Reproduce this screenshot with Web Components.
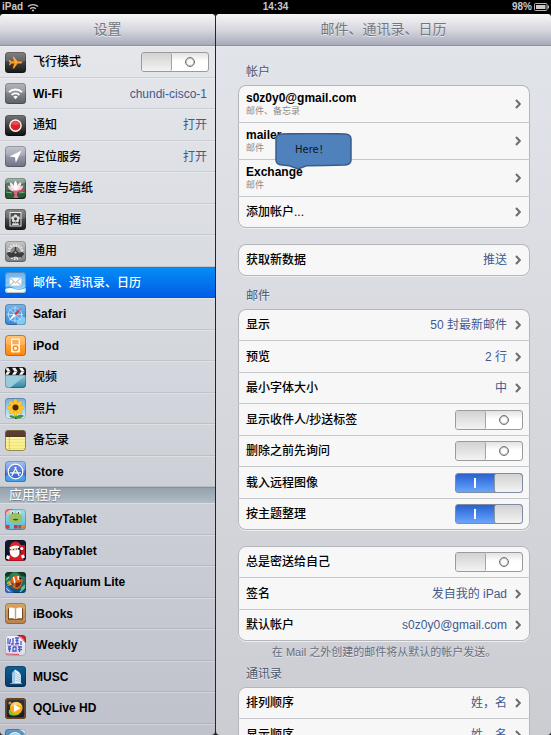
<!DOCTYPE html>
<html lang="zh-CN">
<head>
<meta charset="utf-8">
<meta name="viewport" content="width=device-width, initial-scale=1">
<title>设置</title>
<style>
	body {
		margin: 0;
		background: #000;
		font-family: "Liberation Sans", "Noto Sans CJK SC", sans-serif;
		font-size: 12px;
	}
	settings-card + settings-card {
		margin-top: 16px;
	}
</style>
</head>
<body>
<settings-app>
	<status-bar slot="status" device="iPad" time="14:34" battery="98%"></status-bar>

	<settings-pane slot="sidebar" heading="设置" kind="sidebar">
		<nav-list>
			<nav-row icon="airplane" label="飞行模式" toggle></nav-row>
			<nav-row icon="wifi" label="Wi-Fi" value="chundi-cisco-1"></nav-row>
			<nav-row icon="notice" label="通知" value="打开"></nav-row>
			<nav-row icon="location" label="定位服务" value="打开"></nav-row>
			<nav-row icon="wallpaper" label="亮度与墙纸"></nav-row>
			<nav-row icon="frame" label="电子相框"></nav-row>
			<nav-row icon="general" label="通用"></nav-row>
			<nav-row icon="mail" label="邮件、通讯录、日历" selected></nav-row>
			<nav-row icon="safari" label="Safari"></nav-row>
			<nav-row icon="ipod" label="iPod"></nav-row>
			<nav-row icon="video" label="视频"></nav-row>
			<nav-row icon="photos" label="照片"></nav-row>
			<nav-row icon="notes" label="备忘录"></nav-row>
			<nav-row icon="store" label="Store"></nav-row>
		</nav-list>
		<nav-heading>应用程序</nav-heading>
		<nav-list>
			<nav-row icon="baby" label="BabyTablet"></nav-row>
			<nav-row icon="santa" label="BabyTablet"></nav-row>
			<nav-row icon="aquarium" label="C Aquarium Lite"></nav-row>
			<nav-row icon="ibooks" label="iBooks"></nav-row>
			<nav-row icon="iweekly" label="iWeekly"></nav-row>
			<nav-row icon="musc" label="MUSC"></nav-row>
			<nav-row icon="qqlive" label="QQLive HD"></nav-row>
			<nav-row icon="globe" label="uu Hill"></nav-row>
		</nav-list>
	</settings-pane>

	<settings-pane slot="detail" heading="邮件、通讯录、日历" kind="detail">
		<group-label>帐户</group-label>
		<settings-card style="--rows: 37px 37px 37px 31px">
			<callout-note>Here！</callout-note>
			<settings-row label="s0z0y0@gmail.com" detail="邮件、备忘录"></settings-row>
			<settings-row label="mailer" detail="邮件"></settings-row>
			<settings-row label="Exchange" detail="邮件"></settings-row>
			<settings-row label="添加帐户..."></settings-row>
		</settings-card>

		<settings-card>
			<settings-row label="获取新数据" value="推送"></settings-row>
		</settings-card>

		<group-label>邮件</group-label>
		<settings-card>
			<settings-row label="显示" value="50 封最新邮件"></settings-row>
			<settings-row label="预览" value="2 行"></settings-row>
			<settings-row label="最小字体大小" value="中"></settings-row>
			<settings-row label="显示收件人/抄送标签" toggle></settings-row>
			<settings-row label="删除之前先询问" toggle></settings-row>
			<settings-row label="载入远程图像" toggle checked></settings-row>
			<settings-row label="按主题整理" toggle checked></settings-row>
		</settings-card>

		<settings-card>
			<settings-row label="总是密送给自己" toggle></settings-row>
			<settings-row label="签名" value="发自我的 iPad"></settings-row>
			<settings-row label="默认帐户" value="s0z0y0@gmail.com"></settings-row>
		</settings-card>
		<group-note>在 Mail 之外创建的邮件将从默认的帐户发送。</group-note>

		<group-label>通讯录</group-label>
		<settings-card>
			<settings-row label="排列顺序" value="姓，名"></settings-row>
			<settings-row label="显示顺序" value="姓，名"></settings-row>
		</settings-card>
	</settings-pane>
</settings-app>

<script>
// Icon art on a 21x21 grid: [top colour, bottom colour, shapes, glossy]
const ICONS = {
	airplane: ['#6a6a6a', '#161616', `
		<path d="M17.2 10.6c0-.7-.8-1-1.6-1h-3L9 4.8H7.6l1.7 4.8H6.4L5 7.9H3.9l.8 2.7-.8 2.7H5l1.4-1.7h2.9l-1.7 4.8H9l3.6-4.8h3c.8 0 1.6-.3 1.6-1z" fill="#ff9a1c"/>`, true],
	wifi: ['#a3a7ae', '#5c6068', `
		<g fill="none" stroke="#fff" stroke-width="1.9">
			<path d="M4 9.2a9.2 9.2 0 0 1 13 0"/>
			<path d="M6.6 12a5.5 5.5 0 0 1 7.8 0"/>
		</g>
		<path d="M10.5 16.2l-2.2-2.4a3.2 3.2 0 0 1 4.4 0z" fill="#fff"/>`, true],
	notice: ['#777', '#0c0c0c', `
		<circle cx="10.5" cy="10.6" r="6.3" fill="#fff"/>
		<circle cx="10.5" cy="10.6" r="4.9" fill="#d9232b"/>
		<path d="M6.3 9a4.5 4.5 0 0 1 8.4 0q-4.200 2-8.400 0z" fill="#e6504f"/>`],
	location: ['#b9bcc9', '#6e7183', `
		<path d="M16.6 4.4L4.4 10.5l5.5.7.9 5.5z" fill="#fff"/>`, true],
	wallpaper: ['#a3bbb0', '#12281c', `
		<path d="M0 6q5-3 9 0t12-2v6H0z" fill="#4a7562"/>
		<path d="M0 13l7-2 3 9-9 1zM21 12l-7 1-2 7 8-1z" fill="#2c5a37"/>
		<path d="M1 14l6 1M14 15l6-1" stroke="#7bb488"/>
		<path d="M2.500 7.500q5 .5 8 6-6.500.500-8-6zM18.500 7.500q-5 .5-8 6 6.500.500 8-6z" fill="#f7c5d2"/>
		<path d="M4.800 4q5 2 5.700 9.500-6-3-5.700-9.500zM16.200 4q-5 2-5.700 9.500 6-3 5.700-9.500z" fill="#fbe6ea"/>
		<path d="M10.500 2.500q3.500 5 .8 10.500h-1.600q-2.700-5.500.8-10.500z" fill="#fff"/>
		<path d="M8 12.500h5l-1 4.500 1.500 3h-5l1-3z" fill="#e0607f"/>
		<path d="M13 12.500q4-1 7-.5-2 3-7 2z" fill="#d63e63"/>`],
	frame: ['#757575', '#1c1c1c', `
		<rect x="5" y="3.500" width="11" height="13.500" fill="#333" stroke="#e8e8e8"/>
		<g fill="#dcdcdc">
			<circle cx="10.500" cy="7.400" r="1.800"/><circle cx="13" cy="9" r="1.800"/>
			<circle cx="12.300" cy="11.600" r="1.800"/><circle cx="8.700" cy="11.600" r="1.800"/>
			<circle cx="8" cy="9" r="1.800"/>
			<path d="M7 16q0-3 3.200-1.500V12h.6v2.500Q14 13 14 16z"/>
		</g>
		<circle cx="10.500" cy="9.800" r="1.500" fill="#222"/>`, true],
	general: ['#c9c9c9', '#7c7c7c', `
		<circle cx="10.500" cy="11" r="7" fill="none" stroke="#ececec" stroke-width="2.200" stroke-dasharray="1.500 1.250"/>
		<circle cx="10.500" cy="11" r="5.800" fill="#8b8b8b" stroke="#e2e2e2"/>
		<path d="M1.500 12.500q3-2.500 5-.5l4-2.500 4 2.500q2-2 5 .5l-3 4h-3.500l-2.500-1.500L8 16.500H4.500z" fill="#3c3c3c"/>
		<circle cx="10.500" cy="11.500" r="1.800" fill="#999" stroke="#2c2c2c"/>
		<path d="M10.500 6v3.500" stroke="#3a3a3a" stroke-width="1.300"/>`],
	mail: ['#4ba0ea', '#b5e2f8', `
		<path d="M0 15q5-2 9 1t12-1v6H0z" fill="#38abd6"/>
		<path d="M0 17q6-2 10 0t11-1v5H0z" fill="#f3fbff"/>
		<rect x="4.500" y="5.500" width="12" height="8.500" rx=".5" fill="#fff" stroke="#b7bcc4" stroke-width=".6"/>
		<path d="M4.800 5.800l5.700 5 5.700-5M4.800 13.700l4.200-4.200M16.200 13.700L12 9.500" fill="none" stroke="#858b96" stroke-width=".8"/>`, true],
	safari: ['#78b5ed', '#3c86d2', `
		<path d="M11 13l4-2 6 3v7h-9z" fill="#80cff0"/>
		<circle cx="10" cy="10.500" r="6.700" fill="#5aa3e6" stroke="#a9d4f7"/>
		<path d="M10 2.500v16M2 10.500h16M4.400 4.900l11.200 11.200M15.600 4.900L4.400 16.100" stroke="#dff2ff" stroke-width=".7"/>
		<path d="M17 3.500L9 9.400l1.900 2z" fill="#df352b"/>
		<path d="M3.800 17.300l5.200-7.900 1.900 2z" fill="#fff"/>`],
	ipod: ['#ffb968', '#ff8500', `
		<rect x=".5" y=".5" width="20" height="20" rx="3" fill="none" stroke="#d59a23"/>
		<rect x="6" y="3.500" width="9" height="14" rx="1.200" fill="#fff4e6"/>
		<rect x="7.300" y="4.900" width="6.400" height="4.300" fill="#ff9b2e"/>
		<circle cx="10.500" cy="13.300" r="2.300" fill="none" stroke="#ff8a10" stroke-width="1.400"/>`, true],
	video: ['#d8eef5', '#2d87a5', `
		<path d="M0 8h21L5 21H0z" fill="#9acbdc"/>
		<rect width="21" height="8.200" fill="#171717"/>
		<g fill="#f4f4f4">
			<path d="M0 .8h3.200l2.300 3.400H2.200zM7 .8h3.400l2.200 3.400H9.200zM14 .8h3.400l2.200 3.400h-3.400z"/>
			<path d="M2.200 4.500h3.300L3.200 7.800H0zM9.200 4.500h3.400l-2.200 3.300H7zM16.200 4.500h3.400l-2.200 3.300H14z"/>
		</g>`],
	photos: ['#71aee8', '#d6efff', `
		<path d="M10 13l1 8" stroke="#2d8a28" stroke-width="2"/>
		<path d="M11 19q4-4 8-1-4 3.500-8 2zM10 19q-3-3-6-1 3 3 6 2z" fill="#3d9930"/>
		<g fill="#ffc928" stroke="#e99a0b" stroke-width=".4">
			<ellipse cx="10.500" cy="4.500" rx="1.900" ry="3.800"/><ellipse cx="10.500" cy="14.500" rx="1.900" ry="3.800"/>
			<ellipse cx="5.500" cy="9.500" rx="3.800" ry="1.900"/><ellipse cx="15.500" cy="9.500" rx="3.800" ry="1.900"/>
			<ellipse cx="7" cy="6" rx="3.700" ry="1.900" transform="rotate(45 7 6)"/>
			<ellipse cx="14" cy="13" rx="3.700" ry="1.900" transform="rotate(45 14 13)"/>
			<ellipse cx="14" cy="6" rx="3.700" ry="1.900" transform="rotate(-45 14 6)"/>
			<ellipse cx="7" cy="13" rx="3.700" ry="1.900" transform="rotate(-45 7 13)"/>
		</g>
		<circle cx="10.500" cy="9.500" r="3" fill="#4b260d"/>`],
	notes: ['#fdf9a8', '#f7ee82', `
		<path d="M1 9.500h19M1 12.500h19M1 15.500h19M1 18.500h19" stroke="#e8dd7c" stroke-width=".7"/>
		<path d="M4.300 6v15" stroke="#d5a05a" stroke-width=".6"/>
		<rect width="21" height="6" fill="#5b3d31"/>
		<path d="M0 6.400h21" stroke="#3c251c"/>
		<rect x=".4" y=".4" width="20.200" height="20.200" rx="3" fill="none" stroke="#a59a5a" stroke-width=".8"/>`],
	store: ['#95b6ee', '#1f4fc4', `
		<path d="M0 15q10-4 21 0v6H0z" fill="#49a0ea"/>
		<circle cx="10.500" cy="10.500" r="7.300" fill="#3a6bd8" stroke="#fff" stroke-width="1.200"/>
		<path d="M7 14.500l4-8M14 14.500l-4-8M5.500 11.800h10" stroke="#fff" stroke-width="1.300" stroke-linecap="round"/>`, true],
	baby: ['#a4dced', '#4dbbdc', `
		<path d="M0 0h8L0 7z" fill="#e88080"/><path d="M1 5l5-4" stroke="#fff" stroke-width=".8"/>
		<circle cx="7.500" cy="4" r="2.200" fill="#e4f0c8"/><circle cx="13.500" cy="4" r="2.200" fill="#e4f0c8"/>
		<ellipse cx="10.500" cy="9" rx="7" ry="5.300" fill="#9cc065"/>
		<path d="M7.600 10.200q3 2.500 6 0-3-.8-6 0z" fill="#3c5619"/>
		<circle cx="7.500" cy="4" r=".7"/><circle cx="13.500" cy="4" r=".7"/>
		<rect x="1" y="16" width="3.500" height="3.500" fill="#d9363d"/><rect x="5.300" y="16" width="3" height="3.500" fill="#6fc5dc"/>
		<rect x="9" y="16" width="3.500" height="3.500" fill="#c8343f"/><rect x="13.300" y="16" width="3" height="3.500" fill="#a84b5a"/>
		<rect x="17" y="16" width="3" height="3.500" fill="#f17c29"/>`],
	santa: ['#151b33', '#090d1c', `
		<path d="M15 5h5v10h-4z" fill="#c41a22"/>
		<path d="M2.500 21q0-9 8-9t8.500 9z" fill="#d91c24"/>
		<path d="M4.500 8q1-6.500 6-6.500 5.500.500 6 6.500l-3-1.500z" fill="#e3222a"/>
		<circle cx="16.800" cy="8.500" r="1.600" fill="#fff"/>
		<circle cx="9.500" cy="9.500" r="3.600" fill="#f6c9a8"/>
		<path d="M4.500 7.500q4.500-2.800 9.500-1.500l.3 2q-5-1-9.500 1.500z" fill="#fff"/>
		<path d="M4.500 10q5 1.500 10-.5.8 7.500-4.500 8-5.500-.500-5.500-7.500z" fill="#fff"/>
		<circle cx="8.300" cy="9.400" r=".5"/><circle cx="11.300" cy="9.100" r=".5"/>
		<path d="M2 15l3 1.500-1 3-3-1zM16 15.500l3-1 1 3-3 1z" fill="#fff"/>`],
	aquarium: ['#2d8b51', '#0d4d83', `
		<path d="M0 0h8L3 5 0 4zM12 0h9v5l-5-1z" fill="#153d26"/>
		<path d="M1 8l3-3M2 12l3-3M16 17l4-4M15 20l5-5" stroke="#65d18b" stroke-width="1.300"/>
		<path d="M5 9q3-7 9-5 5 2 3 7-1 6-6 6l-4-2 2-3z" fill="#e6601c"/>
		<path d="M8.500 5l1.500 6M13 4l.5 4" stroke="#fff" stroke-width="1.500"/>
		<path d="M10.500 10q3 2 6-1-1 7-6 6.500z" fill="#7b2c10"/>
		<circle cx="15.500" cy="6.500" r="1.100" fill="#111"/>
		<path d="M5 9l-3 1 2 2-2 2 5-1z" fill="#f4a02b"/>
		<path d="M0 12l9 9H0z" fill="#3c76e0"/>
		<path d="M1.500 16.500l3 3" stroke="#fff" stroke-width=".8"/>`],
	ibooks: ['#d8a764', '#b9824a', `
		<path d="M0 5h21M0 16h21" stroke="#e5bd83" stroke-width=".6"/>
		<path d="M3 5.500l1-.5v10.500H17V5l1 .5v11.200h-6.500l-1 .8-1-.8H3z" fill="#6d4520"/>
		<path d="M10.500 6Q7.500 3.600 4 5v10.300q3.500-1 6.500 1zM10.500 6q3-2.400 6.500-1v10.300q-3.500-1-6.500 1z" fill="#fff"/>
		<path d="M10.500 6v10.300" stroke="#8c8c8c" stroke-width=".8"/>
		<path d="M9.500 6.500v8.700M11.500 6.500v8.700" stroke="#ddd" stroke-width=".6"/>`],
	iweekly: ['#f5f5fb', '#d8dae8', `
		<g stroke="#4a56cc" stroke-width="1.300" fill="none">
			<path d="M3 3v6M5.500 4l-1 5M8 3v6H6M10 3h4M10.500 5.500h3M12 3v6M10 9l4-.5M16 6v4"/>
			<path d="M3 12l3-.5M4.500 11v6M3 14h3M8 12v5M8 12h3v4H8M13 12h4M14.500 11v6M13 14.500h4"/>
		</g>
		<path d="M1 19l13 .5" stroke="#d8465b" stroke-width="1.200"/>
		<path d="M2 10.300h12" stroke="#e48896" stroke-width=".8"/>
		<path d="M12 0h9v8z" fill="#d91f30"/><path d="M15 1.500l4 4" stroke="#fff" stroke-width=".8"/>`],
	musc: ['#0f5e92', '#073a68', `
		<path d="M7 7l3-3.500v14H7z" fill="#9fcbe5"/>
		<path d="M10 3.500q5 2 6 6v8h-6z" fill="#dfeef7"/>
		<path d="M10 6.500l6 4M10 9l6 3.500M10 11.500l6 2.700M10 14l6 1.800" stroke="#8fbbd8" stroke-width=".7"/>
		<path d="M5 17.500h12" stroke="#8fc0dd" stroke-width=".8"/>`],
	qqlive: ['#2b3a49', '#111b27', `
		<rect x=".8" y=".8" width="19.400" height="19.400" rx="2.700" fill="none" stroke="#8b5828" stroke-width="1.600"/>
		<circle cx="5" cy="5" r="1.600" fill="#ef8e1d"/>
		<path d="M4 12q3-2 5 1t6 3q-5 3-10 1-2-2-1-5z" fill="#83bf31"/>
		<circle cx="11.300" cy="10" r="6.300" fill="#ffab16"/>
		<path d="M5.500 9q1-5 6-5 4 .5 5.500 4-6-2-11.500 1z" fill="#ffd15c"/>
		<path d="M9 6.300l6.500 3.900L9 14z" fill="#fff"/>`],
	globe: ['#5f9fcb', '#1d5e93', `
		<circle cx="10" cy="11" r="7.500" fill="#a9d4ea" stroke="#e1f2fa"/>
		<path d="M14 0h7v7z" fill="#dceaf3"/><path d="M16 1.500l3.500 3.500" stroke="#4177a3"/>
		<circle cx="10" cy="11" r="4" fill="#4b90be"/>`]
}

function drawIcon(name) {
	const [top, bottom, shapes, glossy] = ICONS[name]
	return `
		<svg class="icon" viewBox="0 0 21 21" aria-hidden="true">
			<defs>
				<linearGradient id="fill" x2="0" y2="1">
					<stop offset="0" stop-color="${top}"/>
					<stop offset="1" stop-color="${bottom}"/>
				</linearGradient>
				<clipPath id="tile"><rect width="21" height="21" rx="3.500"/></clipPath>
			</defs>
			<g clip-path="url(#tile)">
				<rect width="21" height="21" fill="url(#fill)"/>
				${shapes}
				${glossy ? '<path d="M0 0h21v9q-10.500 3-21 0z" fill="#fff" opacity=".16"/>' : ''}
			</g>
			<rect x=".5" y=".5" width="20" height="20" rx="3" fill="none" stroke="#000" stroke-opacity=".22"/>
		</svg>`
}

// Chinese labels look too heavy in bold, so they get the medium weight
function labelClass(text) {
	return /[\u4e00-\u9fff]/.test(text) ? 'label han' : 'label'
}

// Shared by every row that can hold a switch
const SWITCH_CSS = `
	input {
		appearance: none;
		position: relative;
		flex: none;
		width: 68px;
		height: 20px;
		margin: 0;
		border: 1px solid #9b9b9b;
		border-radius: 3px;
		overflow: hidden;
		display: flex;
		align-items: center;
		background: linear-gradient(#e2e2e2, #fff 45%);
	}
	input::before {
		content: "";
		order: 1;
		box-sizing: border-box;
		width: 30px;
		height: 18px;
		border-right: 1px solid #a3a3a3;
		border-radius: 2px;
		background: linear-gradient(#d2d2d2, #f3f3f3);
	}
	input::after {
		content: "";
		order: 2;
		box-sizing: border-box;
		width: 10px;
		height: 10px;
		margin: 0 auto;
		border: 1px solid #707070;
		border-radius: 50%;
		box-shadow: inset 0 0 0 1px #c4c4c4;
	}
	input:checked {
		border-color: #7f8ba0;
		background: linear-gradient(#2c61cb, #4583ea 50%, #6ca5f8);
	}
	input:checked::before {
		order: 3;
		width: 28px;
		border-right: 0;
		border-left: 1px solid #8a93a3;
	}
	input:checked::after {
		width: 2px;
		border: 0;
		border-radius: 0;
		background: #fff;
		box-shadow: none;
	}
`

class SettingsApp extends HTMLElement {
	constructor() {
		super()
		this.attachShadow({ mode: 'open' })
	}

	connectedCallback() {
		this.shadowRoot.innerHTML = `
			<style>
				:host {
					display: flex;
					flex-direction: column;
					height: 100dvh;
					overflow: hidden;
				}
				main {
					flex: 1;
					min-height: 0;
					display: grid;
					grid-template-columns: 215px minmax(0, 1fr);
					gap: 1px;
					background: #22252b;
				}
			</style>
			<slot name="status"></slot>
			<main>
				<slot name="sidebar"></slot>
				<slot name="detail"></slot>
			</main>`
	}
}
customElements.define('settings-app', SettingsApp)

class StatusBar extends HTMLElement {
	constructor() {
		super()
		this.attachShadow({ mode: 'open' })
	}

	connectedCallback() {
		this.shadowRoot.innerHTML = `
			<style>
				:host {
					display: grid;
					grid-template-columns: 1fr auto 1fr;
					align-items: center;
					height: 14px;
					padding: 0 2px;
					background: #000;
					color: #c9c9c9;
					font-size: 10px;
					font-weight: bold;
					line-height: 14px;
				}
				div {
					display: flex;
					align-items: center;
					gap: 4px;
				}
				.right {
					justify-content: flex-end;
					gap: 2px;
				}
			</style>
			<div>
				<span>${this.getAttribute('device')}</span>
				<svg width="12" height="9" viewBox="0 0 12 9" aria-hidden="true">
					<path d="M1 3.600a7.200 7.200 0 0 1 10 0M3.200 5.800a4 4 0 0 1 5.600 0" fill="none" stroke="#c9c9c9" stroke-width="1.400"/>
					<path d="M6 8.800L4.600 7.300a2 2 0 0 1 2.800 0z" fill="#c9c9c9"/>
				</svg>
			</div>
			<span>${this.getAttribute('time')}</span>
			<div class="right">
				<span>${this.getAttribute('battery')}</span>
				<svg width="15" height="8" viewBox="0 0 15 8" aria-hidden="true">
					<rect x=".5" y=".5" width="12.500" height="7" rx="1" fill="none" stroke="#b5b5b5"/>
					<rect x="2" y="2" width="9.500" height="4" fill="#c9c9c9"/>
					<rect x="13.500" y="2.500" width="1.500" height="3" fill="#b5b5b5"/>
				</svg>
			</div>`
	}
}
customElements.define('status-bar', StatusBar)

class SettingsPane extends HTMLElement {
	constructor() {
		super()
		this.attachShadow({ mode: 'open' })
	}

	connectedCallback() {
		this.shadowRoot.innerHTML = `
			<style>
				:host {
					display: flex;
					flex-direction: column;
					min-width: 0;
					min-height: 0;
					border-radius: 4px;
					overflow: hidden;
				}
				:host([kind="sidebar"]) {
					background: linear-gradient(#e6e8ec, #d3d6dc 50%, #bfc2cb);
				}
				:host([kind="detail"]) {
					background: linear-gradient(#e2e5eb, #d7d9df 50%, #cccdd3);
				}
				h1 {
					flex: none;
					margin: 0;
					border-bottom: 1px solid #8f92a4;
					background: linear-gradient(#f6f6f8, #d7d8df 50%, #a8aaba);
					color: #74787f;
					font-size: 14px;
					font-weight: normal;
					line-height: 31px;
					text-align: center;
					text-shadow: 0 1px 0 #e9e9ee;
				}
				.body {
					flex: 1;
					min-height: 0;
					overflow-y: auto;
					scrollbar-width: none;
				}
				:host([kind="detail"]) .body {
					padding: 6px 21px 0 22px;
				}
			</style>
			<h1>${this.getAttribute('heading')}</h1>
			<div class="body"><slot></slot></div>`
	}
}
customElements.define('settings-pane', SettingsPane)

class NavList extends HTMLElement {
	constructor() {
		super()
		this.attachShadow({ mode: 'open' })
	}

	connectedCallback() {
		this.shadowRoot.innerHTML = `
			<style>
				:host {
					display: grid;
					grid-auto-rows: 32px 31px;
				}
			</style>
			<slot></slot>`
	}
}
customElements.define('nav-list', NavList)

class NavHeading extends HTMLElement {
	constructor() {
		super()
		this.attachShadow({ mode: 'open' })
	}

	connectedCallback() {
		this.shadowRoot.innerHTML = `
			<style>
				:host {
					display: block;
					box-sizing: border-box;
					height: 16px;
					padding-left: 9px;
					border-top: 1px solid #83919c;
					background: linear-gradient(#93a2ad, #b2bcc4);
					color: #fff;
					font-size: 13px;
					line-height: 14px;
					text-shadow: 0 1px 1px #6f7b85;
				}
			</style>
			<slot></slot>`
	}
}
customElements.define('nav-heading', NavHeading)

class NavRow extends HTMLElement {
	constructor() {
		super()
		this.attachShadow({ mode: 'open' })
	}

	connectedCallback() {
		const label = this.getAttribute('label')
		const value = this.getAttribute('value') || ''
		const content = `${drawIcon(this.getAttribute('icon'))}<span class="${labelClass(label)}">${label}</span>`

		this.shadowRoot.innerHTML = `
			<style>
				:host {
					display: grid;
					box-sizing: border-box;
					border-top: 1px solid rgba(255, 255, 255, 0.3);
					border-bottom: 1px solid rgba(90, 95, 110, 0.16);
				}
				:host([selected]) {
					border-color: #0a7fe8 transparent #0057d8;
					background: #0268ea linear-gradient(#058cf5, #015de6);
					color: #fff;
				}
				button, .row {
					display: flex;
					align-items: center;
					gap: 7px;
					min-width: 0;
					padding: 0 8px 0 5px;
					border: 0;
					background: none;
					color: inherit;
					font: inherit;
					line-height: 14px;
					text-align: left;
				}
				.row {
					padding-right: 6px;
				}
				.icon {
					flex: none;
					width: 21px;
					height: 21px;
				}
				.label {
					flex: 1;
					font-weight: bold;
					white-space: nowrap;
				}
				.han {
					font-weight: 500;
				}
				.value {
					color: #42598f;
					white-space: nowrap;
				}
				${SWITCH_CSS}
			</style>
			${this.hasAttribute('toggle')
				? `<label class="row">${content}<input type="checkbox" role="switch"></label>`
				: `<button type="button">${content}<span class="value">${value}</span></button>`}`
	}
}
customElements.define('nav-row', NavRow)

class GroupLabel extends HTMLElement {
	constructor() {
		super()
		this.attachShadow({ mode: 'open' })
	}

	connectedCallback() {
		this.shadowRoot.innerHTML = `
			<style>
				:host {
					display: block;
					padding: 7px 8px 0;
				}
				h2 {
					margin: 0;
					color: #4c566c;
					font-size: 12px;
					font-weight: normal;
					line-height: 26px;
					text-shadow: 0 1px 0 #f0f1f4;
				}
			</style>
			<h2><slot></slot></h2>`
	}
}
customElements.define('group-label', GroupLabel)

class GroupNote extends HTMLElement {
	constructor() {
		super()
		this.attachShadow({ mode: 'open' })
	}

	connectedCallback() {
		this.shadowRoot.innerHTML = `
			<style>
				:host {
					display: block;
					height: 13px;
					color: #646d80;
					font-size: 11px;
					line-height: 22px;
					text-align: center;
					text-shadow: 0 1px 0 #e6e7ea;
				}
			</style>
			<slot></slot>`
	}
}
customElements.define('group-note', GroupNote)

class SettingsCard extends HTMLElement {
	constructor() {
		super()
		this.attachShadow({ mode: 'open' })
	}

	connectedCallback() {
		this.shadowRoot.innerHTML = `
			<style>
				:host {
					position: relative;
					display: grid;
					grid-auto-rows: var(--rows, 31px 32px);
					padding-top: 1px;
					border-radius: 8px;
					background: #f7f7f7;
					box-shadow: inset 0 0 0 1px #b4b6bb, 0 1px 0 #eceef1;
				}
				::slotted(:last-child) {
					border-bottom-color: transparent;
				}
			</style>
			<slot></slot>`
	}
}
customElements.define('settings-card', SettingsCard)

class SettingsRow extends HTMLElement {
	constructor() {
		super()
		this.attachShadow({ mode: 'open' })
	}

	connectedCallback() {
		const label = this.getAttribute('label')
		const detail = this.getAttribute('detail')
		const value = this.getAttribute('value') || ''
		const checked = this.hasAttribute('checked') ? 'checked' : ''

		this.shadowRoot.innerHTML = `
			<style>
				:host {
					display: grid;
					box-sizing: border-box;
					border-bottom: 1px solid #c6c7ca;
				}
				button, .row {
					display: flex;
					align-items: center;
					gap: 8px;
					min-width: 0;
					padding: 0 9px 0 8px;
					border: 0;
					background: none;
					color: #000;
					font: inherit;
					line-height: 14px;
					text-align: left;
				}
				.row {
					padding-right: 7px;
				}
				.text {
					flex: 1;
					display: flex;
					flex-direction: column;
					white-space: nowrap;
				}
				.label {
					font-weight: bold;
				}
				.han {
					font-weight: 500;
				}
				.detail {
					color: #8a8a8a;
					font-size: 9px;
					line-height: 12px;
				}
				.value {
					color: #42598f;
					white-space: nowrap;
				}
				svg {
					flex: none;
				}
				${SWITCH_CSS}
			</style>
			${this.hasAttribute('toggle')
				? `<label class="row">
					<span class="text"><span class="${labelClass(label)}">${label}</span></span>
					<input type="checkbox" role="switch" ${checked}>
				</label>`
				: `<button type="button">
					<span class="text">
						<span class="${labelClass(label)}">${label}</span>
						${detail ? `<span class="detail">${detail}</span>` : ''}
					</span>
					<span class="value">${value}</span>
					<svg width="6" height="10" viewBox="0 0 6 10" aria-hidden="true">
						<path d="M1 1l3.800 4L1 9" fill="none" stroke="#6e6e6e" stroke-width="2"/>
					</svg>
				</button>`}`
	}
}
customElements.define('settings-row', SettingsRow)

class CalloutNote extends HTMLElement {
	constructor() {
		super()
		this.attachShadow({ mode: 'open' })
	}

	connectedCallback() {
		this.shadowRoot.innerHTML = `
			<style>
				:host {
					position: absolute;
					z-index: 1;
					left: 37px;
					top: 48px;
					display: grid;
					width: 77px;
					height: 37px;
					color: #10151c;
					font-family: "DejaVu Sans", "Noto Sans CJK SC", sans-serif;
					font-size: 10px;
					line-height: 34px;
				}
				svg, span {
					grid-area: 1 / 1;
				}
				span {
					padding-left: 20px;
				}
			</style>
			<svg width="77" height="37" viewBox="0 0 77 37" aria-hidden="true">
				<path d="M7 1Q38-.2 70 1q6 .5 6 5v21q0 4.500-6 5-20 .8-38.500.8L23 36l-8.500-3.200L7 32q-6-.5-6-5V6q0-4.500 6-5z" fill="#4f81bd" stroke="#385d8a" stroke-width="1.500"/>
			</svg>
			<span><slot></slot></span>`
	}
}
customElements.define('callout-note', CalloutNote)
</script>
</body>
</html>
